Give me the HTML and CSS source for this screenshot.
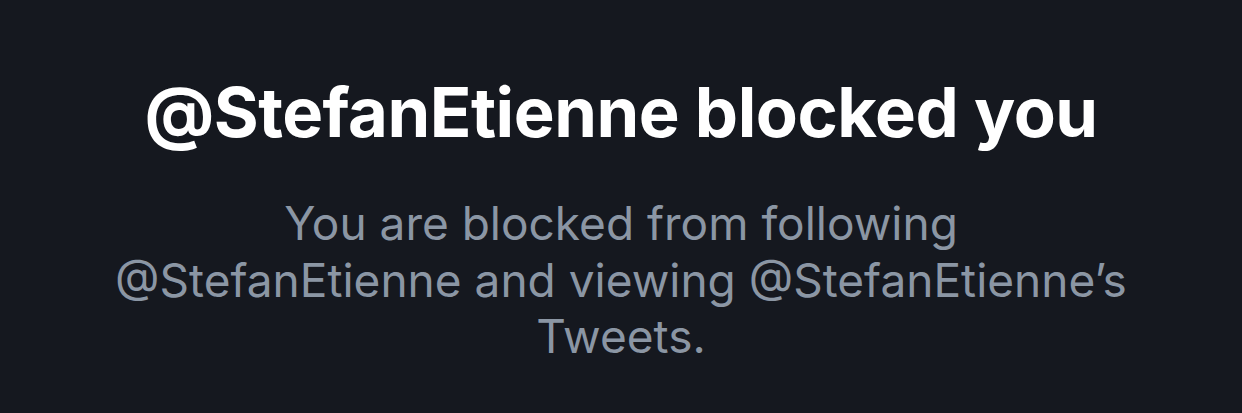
FILE: index.html
```html
<!DOCTYPE html>
<html>
<head>
<meta charset="utf-8">
<link rel="stylesheet" href="styles.css">
</head>
<body>
<main class="blocked">
  <h1 class="blocked-title">@StefanEtienne blocked you</h1>
  <p class="blocked-text">You are blocked from following<br>@StefanEtienne and viewing @StefanEtienne’s Tweets.</p>
</main>
</body>
</html>
```
FILE: styles.css
```css
html, body {
  margin: 0;
  padding: 0;
  background: #15181f;
  height: 100%;
}
.blocked {
  display: flex;
  flex-direction: column;
  align-items: center;
  padding-top: 69px;
  font-family: Inter, "Noto Sans", sans-serif;
}
.blocked-title {
  margin: 0;
  color: #ffffff;
  font-weight: 700;
  font-size: 68.7px;
  line-height: 86px;
  letter-spacing: -0.5px;
}
.blocked-text {
  margin: 40px 0 0;
  max-width: 1020px;
  text-align: center;
  color: #8b96a4;
  font-weight: 400;
  font-size: 46px;
  line-height: 56.5px;
}
```
